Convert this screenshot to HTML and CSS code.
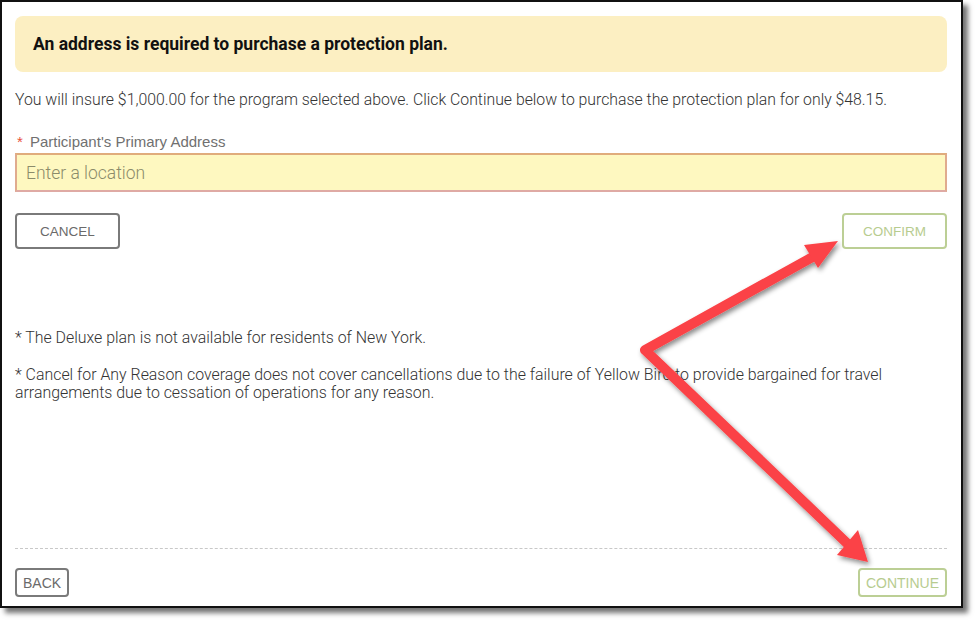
FILE: index.html
```html
<!DOCTYPE html>
<html>
<head>
<meta charset="utf-8">
<link rel="stylesheet" href="styles.css">
</head>
<body>
<div class="frame">
  <div class="alert">An address is required to purchase a protection plan.</div>
  <p class="intro">You will insure $1,000.00 for the program selected above. Click Continue below to purchase the protection plan for only $48.15.</p>
  <div class="field">
    <label class="label"><span class="req">*</span> Participant's Primary Address</label>
    <input class="input" type="text" placeholder="Enter a location">
  </div>
  <div class="actions">
    <button class="btn btn-grey">CANCEL</button>
    <button class="btn btn-green">CONFIRM</button>
  </div>
  <div class="notes">
    <p>* The Deluxe plan is not available for residents of New York.</p>
    <p>* Cancel for Any Reason coverage does not cover cancellations due to the failure of Yellow Bird to provide bargained for travel arrangements due to cessation of operations for any reason.</p>
  </div>
  <div class="footer">
    <button class="btn btn-grey btn-small">BACK</button>
    <button class="btn btn-green btn-small">CONTINUE</button>
  </div>
</div>
<svg class="arrows" width="978" height="623" viewBox="0 0 978 623">
  <defs>
    <filter id="sh" x="-20%" y="-20%" width="140%" height="140%">
      <feDropShadow dx="2" dy="3" stdDeviation="2.5" flood-color="#000" flood-opacity="0.45"/>
    </filter>
  </defs>
  <g filter="url(#sh)" fill="#fb4246" stroke="#fb4246">
    <polyline points="818,254 645,350 852,548" fill="none" stroke-width="10" stroke-linejoin="round" stroke-linecap="butt"/>
    <polygon points="804,245 838,241 818,268" stroke="none"/>
    <polygon points="837,555 868,562 858,530" stroke="none"/>
  </g>
</svg>
</body>
</html>
```
FILE: styles.css
```css
html, body {
  margin: 0;
  padding: 0;
  background: #ffffff;
}
body {
  width: 978px;
  height: 623px;
  position: relative;
  font-family: Roboto, "Liberation Sans", Arial, sans-serif;
  color: #3a3a3a;
}
.frame {
  box-sizing: border-box;
  width: 963px;
  height: 608px;
  border: 2px solid #111;
  background: #fff;
  box-shadow: 5px 5px 5px rgba(0, 0, 0, 0.55);
  padding: 14px 14px 9px 13px;
  display: flex;
  flex-direction: column;
}
.alert {
  height: 56px;
  box-sizing: border-box;
  background: #fcefc2;
  border-radius: 8px;
  padding-left: 18px;
  display: flex;
  align-items: center;
  font-weight: 700;
  font-size: 17.5px;
  color: #111;
}
.intro {
  margin: 19px 0 0 0;
  font-size: 15.8px;
  font-weight: 300;
  line-height: 18px;
  color: #333;
}
.field {
  margin-top: 24px;
  display: flex;
  flex-direction: column;
}
.label {
  font-family: "Liberation Sans", Arial, sans-serif;
  font-size: 15px;
  line-height: 17px;
  color: #707070;
  padding-left: 2px;
}
.req {
  color: #e8503a;
  margin-right: 3px;
}
.input {
  margin-top: 3px;
  box-sizing: border-box;
  height: 39px;
  width: 100%;
  background: #fef8c0;
  border: 2px solid #e0ac7c;
  border-bottom-color: #dfaaa4;
  border-left-color: #e0ab8e;
  border-right-color: #e0ab8e;
  padding: 0 9px;
  font-family: Roboto, sans-serif;
  font-weight: 300;
  font-size: 17.5px;
  outline: none;
}
.input::placeholder {
  color: #8b8b6a;
}
.actions {
  margin-top: 21px;
  display: flex;
  justify-content: space-between;
}
.btn {
  box-sizing: border-box;
  background: #fff;
  border-radius: 4px;
  font-family: "Liberation Sans", Arial, sans-serif;
  font-size: 13.5px;
  height: 36px;
  width: 105px;
  padding: 0;
  cursor: pointer;
}
.btn-grey {
  border: 2px solid #7a7a7a;
  color: #6a6a6a;
}
.btn-green {
  border: 2px solid #bccf95;
  color: #b7cc8f;
}
.notes {
  margin-top: 80px;
  font-size: 15.9px;
  font-weight: 300;
  line-height: 18px;
  color: #333;
}
.notes p {
  margin: 0 0 19px 0;
}
.footer {
  margin-top: auto;
  border-top: 1px dashed #c8c8c8;
  padding-top: 19px;
  display: flex;
  justify-content: space-between;
}
.btn-small {
  height: 29px;
  width: auto;
  padding: 0 6px;
  font-size: 14px;
}
.arrows {
  position: absolute;
  left: 0;
  top: 0;
  pointer-events: none;
}
```
